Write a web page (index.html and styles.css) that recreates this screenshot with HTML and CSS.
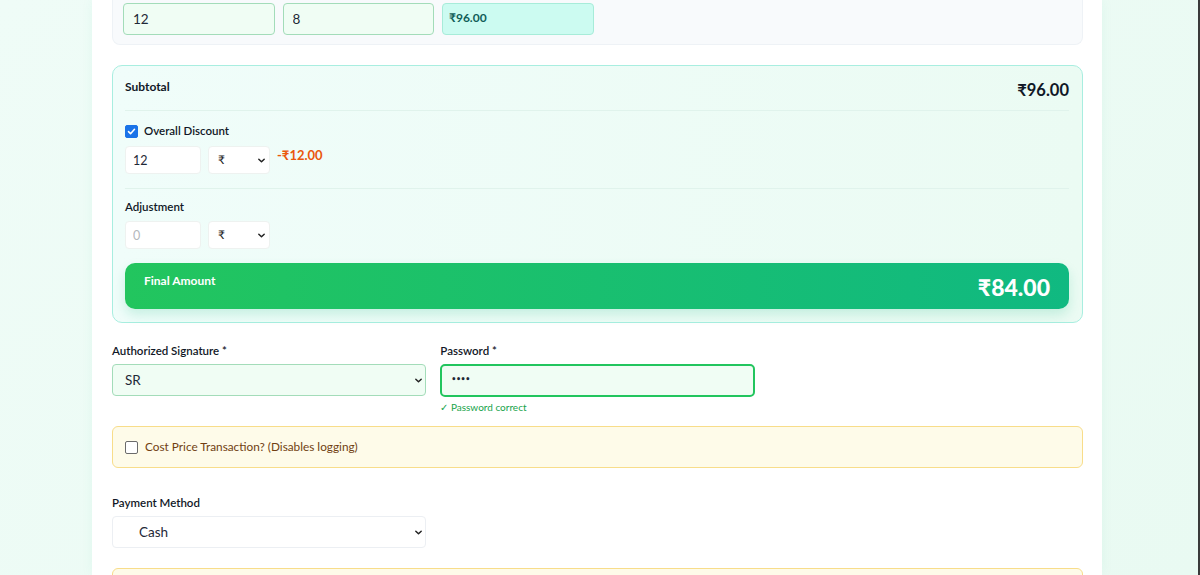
FILE: index.html
```html
<!DOCTYPE html>
<html lang="en">
<head>
<meta charset="utf-8">
<title>Invoice</title>
<link rel="stylesheet" href="styles.css">
</head>
<body>
<div class="page">
  <div class="card">
    <div class="items-box">
      <div class="items-grid">
        <input class="item-input" type="text" value="12">
        <input class="item-input" type="text" value="8">
        <div class="item-total">₹96.00</div>
      </div>
    </div>

    <div class="summary">
      <div class="sum-row">
        <span class="sum-label">Subtotal</span>
        <span class="sum-value">₹96.00</span>
      </div>
      <div class="sum-section">
        <label class="check-label"><span class="checkbox checked"><svg viewBox="0 0 14 14" width="13" height="13"><path d="M3.2 7.2 L5.8 9.8 L10.8 4.2" fill="none" stroke="#fff" stroke-width="2" stroke-linecap="round" stroke-linejoin="round"/></svg></span>Overall Discount</label>
        <div class="mini-row">
          <input class="mini-input" type="text" value="12">
          <div class="mini-select"><span>₹</span><svg class="chev" viewBox="0 0 10 10" width="9" height="9"><path d="M2 3.5 L5 6.5 L8 3.5" fill="none" stroke="#222" stroke-width="1.6" stroke-linecap="round" stroke-linejoin="round"/></svg></div>
          <span class="discount">-₹12.00</span>
        </div>
      </div>
      <div class="sum-section adj">
        <div class="field-label">Adjustment</div>
        <div class="mini-row">
          <input class="mini-input" type="text" placeholder="0">
          <div class="mini-select"><span>₹</span><svg class="chev" viewBox="0 0 10 10" width="9" height="9"><path d="M2 3.5 L5 6.5 L8 3.5" fill="none" stroke="#222" stroke-width="1.6" stroke-linecap="round" stroke-linejoin="round"/></svg></div>
        </div>
      </div>
      <div class="final">
        <span class="final-label">Final Amount</span>
        <span class="final-value">₹84.00</span>
      </div>
    </div>

    <div class="form-grid">
      <div class="field">
        <div class="field-label">Authorized Signature *</div>
        <div class="select green"><span>SR</span><svg class="chev" viewBox="0 0 10 10" width="9" height="9"><path d="M2 3.5 L5 6.5 L8 3.5" fill="none" stroke="#222" stroke-width="1.6" stroke-linecap="round" stroke-linejoin="round"/></svg></div>
      </div>
      <div class="field">
        <div class="field-label">Password *</div>
        <div class="password"><span class="dots">••••</span></div>
        <div class="hint">✓ Password correct</div>
      </div>
    </div>

    <div class="warn">
      <label class="check-label warn-label"><span class="checkbox"></span>Cost Price Transaction? (Disables logging)</label>
    </div>

    <div class="form-grid pay">
      <div class="field">
        <div class="field-label">Payment Method</div>
        <div class="select"><span>Cash</span><svg class="chev" viewBox="0 0 10 10" width="9" height="9"><path d="M2 3.5 L5 6.5 L8 3.5" fill="none" stroke="#222" stroke-width="1.6" stroke-linecap="round" stroke-linejoin="round"/></svg></div>
      </div>
    </div>

    <div class="warn next"></div>
  </div>
  <div class="edge"></div>
</div>
</body>
</html>
```

FILE: styles.css
```css
* { box-sizing: border-box; }
html, body { margin: 0; padding: 0; height: 100%; overflow: hidden; }
body {
  font-family: Lato, "Noto Sans", sans-serif;
  color: #111827;
  background: linear-gradient(135deg, #effcf7 0%, #e9faf2 100%);
}
.page {
  display: flex;
  height: 575px;
  padding-left: 92px;
}
.card {
  width: 1010px;
  background: #ffffff;
  padding: 0 19px 0 20px;
  box-shadow: 0 0 12px rgba(16, 185, 129, 0.06);
}
.edge {
  margin-left: auto;
  width: 2px;
  background: #3a3a3a;
}

/* items */
.items-box {
  background: #f8fafc;
  border: 1px solid #eef2f6;
  border-top: none;
  border-radius: 0 0 8px 8px;
  padding: 3px 10px 9px 10px;
}
.items-grid {
  display: grid;
  grid-template-columns: repeat(6, minmax(0, 1fr));
  gap: 8px;
}
.item-input {
  width: 100%;
  height: 32px;
  border: 1px solid #a3dcb9;
  background: #f0fdf4;
  border-radius: 4px;
  padding: 0 9px;
  font: 13.5px Lato, "Noto Sans", sans-serif;
  color: #1f2937;
  outline: none;
}
.item-total {
  height: 32px;
  border: 1px solid #a7ecd9;
  background: #ccfbf1;
  border-radius: 4px;
  padding: 6px 6px 0;
  font-size: 12px;
  line-height: 16px;
  font-weight: 700;
  color: #115e59;
}

/* summary */
.summary {
  margin-top: 20px;
  border: 1px solid #a8eee0;
  border-radius: 10px;
  background: linear-gradient(90deg, #f0fdfa 0%, #ebfbf3 100%);
  padding: 13px 13px 13px 12px;
}
.sum-row {
  display: flex;
  justify-content: space-between;
  align-items: flex-start;
  padding-bottom: 9px;
  border-bottom: 1px solid #e0f3ec;
}
.sum-label { font-size: 12px; line-height: 16px; font-weight: 700; }
.sum-value { font-size: 16.5px; line-height: 22px; font-weight: 700; }
.sum-section {
  padding: 13px 0 14px;
  border-bottom: 1px solid #e0f3ec;
}
.sum-section.adj { border-bottom: none; padding: 11px 0 14px; }
.check-label {
  display: flex;
  align-items: center;
  gap: 6px;
  font-size: 11.5px;
  line-height: 14px;
  font-weight: 600;
}
.checkbox {
  width: 13px;
  height: 13px;
  border-radius: 2px;
  border: 1px solid #6b7280;
  background: #fff;
  display: inline-flex;
  align-items: center;
  justify-content: center;
  flex: none;
}
.checkbox.checked { background: #1a73e8; border-color: #1a73e8; }
.mini-row {
  display: flex;
  align-items: flex-start;
  gap: 7px;
  margin-top: 8px;
}
.adj .mini-row { margin-top: 7px; }
.mini-input {
  width: 76px;
  height: 28px;
  border: 1px solid #eef2f0;
  border-radius: 4px;
  background: #fff;
  padding: 0 7px;
  font: 12.5px Lato, "Noto Sans", sans-serif;
  color: #1f2937;
  outline: none;
}
.mini-input::placeholder { color: #b4b8bd; }
.mini-select {
  position: relative;
  width: 62px;
  height: 28px;
  border: 1px solid #eef2f0;
  border-radius: 4px;
  background: #fff;
  font-size: 12px;
  line-height: 16px;
  padding: 5px 0 0 9px;
  color: #222;
}
.chev { position: absolute; right: 3px; top: 50%; margin-top: -4px; }
.discount {
  font-size: 13px;
  line-height: 16px;
  font-weight: 700;
  color: #ea580c;
  margin-top: 1px;
}
.field-label {
  font-size: 11.5px;
  line-height: 14px;
  font-weight: 600;
  color: #111827;
}
.final {
  display: flex;
  justify-content: space-between;
  align-items: flex-start;
  height: 46px;
  border-radius: 10px;
  background: linear-gradient(90deg, #22c55e 0%, #10b981 100%);
  padding: 10px 19px 0;
  color: #fff;
  box-shadow: 0 6px 12px rgba(16, 185, 129, 0.18);
}
.final-label { font-size: 12px; line-height: 16px; font-weight: 700; }
.final-value { font-size: 23px; line-height: 26px; font-weight: 900; margin-top: 1px; }

/* form */
.form-grid {
  display: grid;
  grid-template-columns: repeat(3, minmax(0, 1fr));
  gap: 14px;
  margin-top: 21px;
}
.field { display: flex; flex-direction: column; gap: 6px; }
.select {
  position: relative;
  height: 32px;
  border: 1px solid #eceff3;
  border-radius: 4px;
  background: #fff;
  font-size: 13.5px;
  line-height: 18px;
  padding: 6px 0 0 26px;
  color: #1f2937;
}
.select.green { background: #f0fdf4; border-color: #a3dcb9; padding-left: 12px; }
.select .chev { right: 2px; }
.password {
  height: 33px;
  border: 2px solid #22c55e;
  border-radius: 5px;
  background: #f0fdf4;
  padding: 5px 0 0 9px;
  font: 700 8px/18px "DejaVu Sans", sans-serif;
  color: #1f2937;
  letter-spacing: -0.5px;
}
.hint { font-size: 10px; line-height: 12px; color: #16a34a; margin-top: -2px; }

.warn {
  margin-top: 13px;
  height: 42px;
  border: 1px solid #f8dd8a;
  border-radius: 6px;
  background: #fefbe9;
  padding: 0 12px;
  display: flex;
  align-items: center;
}
.warn-label { color: #713f12; font-weight: 400; gap: 7px; font-size: 11.8px; }
.warn-label .checkbox { border-color: #6b6b6b; }
.form-grid.pay { margin-top: 28px; }
.warn.next { margin-top: 20px; }
```
